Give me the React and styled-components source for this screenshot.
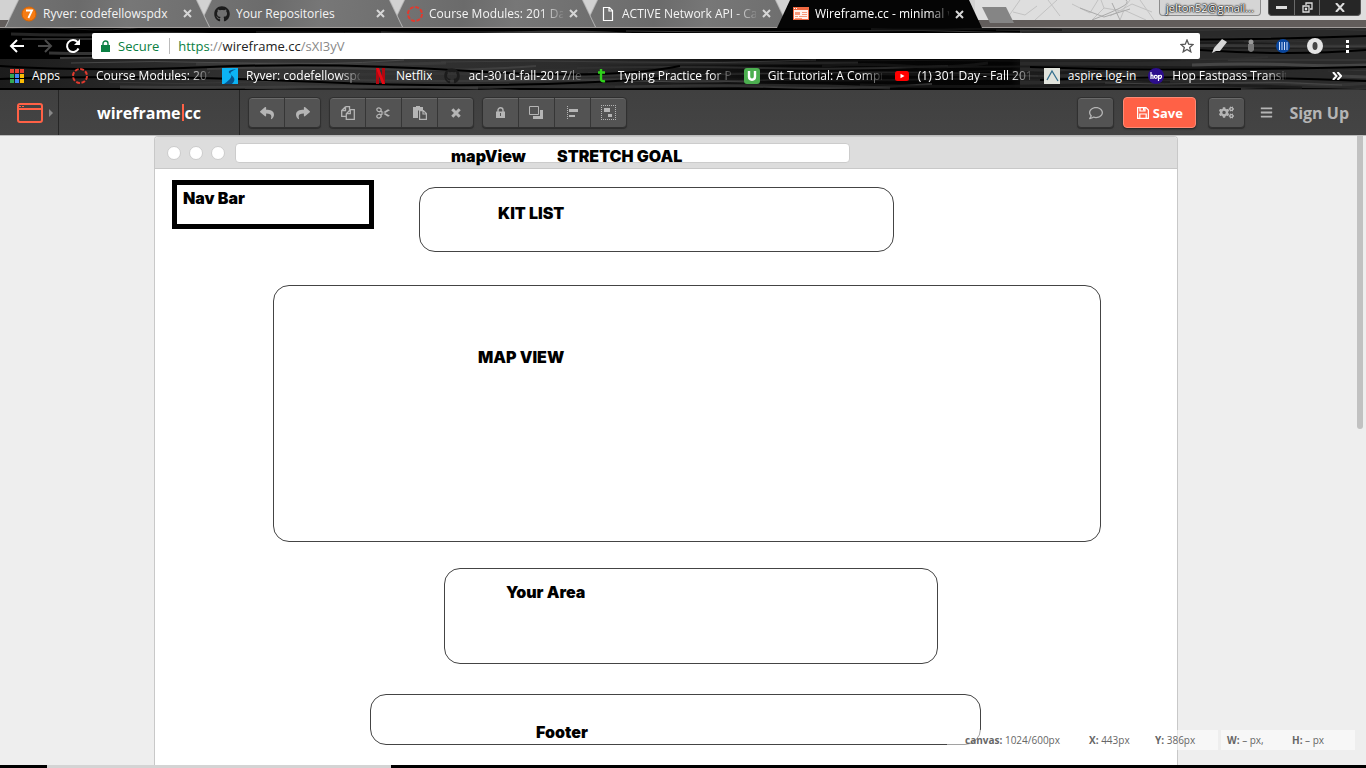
import React from "react";
import styled, { createGlobalStyle, css } from "styled-components";
import { FaGithub, FaReply, FaShare, FaRegComment, FaCogs, FaBars } from "react-icons/fa";

const ui = `"Open Sans", "Noto Sans", sans-serif`;

const GlobalStyle = createGlobalStyle`
  * { box-sizing: border-box; }
  body { margin: 0; background: #000; font-family: ${ui}; font-size: 12px; overflow: hidden; }
  button { font: inherit; color: inherit; background: none; border: 0; padding: 0; cursor: pointer; }
  a { color: inherit; text-decoration: none; }
  svg { display: block; flex: none; }
`;

const Window = styled.div`
  display: flex;
  flex-direction: column;
  height: 100vh;
  padding-bottom: 3px;
  background: linear-gradient(90deg, #000 47px, #d4d4d4 47px, #d4d4d4 391px, #000 391px);
`;

/* ---------- browser chrome ---------- */

const Chrome = styled.header`
  position: relative;
  background: #0a0a0a;
  color: #fff;
`;

const Backdrop = styled.svg`
  position: absolute;
  inset: 0;
  width: 100%;
  height: 100%;
`;

const TabStrip = styled.div`
  position: relative;
  display: flex;
  height: 28px;
  padding-left: 5px;
  border-bottom: 1px solid #a19d9b;
`;

const Tab = styled.div`
  position: relative;
  z-index: ${(p) => p.$z};
  flex: 0 1 205px;
  min-width: 0;
  height: ${(p) => (p.$active ? 28 : 27)}px;
  margin-right: -12px;
  padding: 0 18px 0 16px;
  display: flex;
  align-items: center;
  gap: 6px;
  color: ${(p) => (p.$active ? "#fff" : "#f4f4f4")};
  isolation: isolate;
  &::before, &::after {
    content: "";
    position: absolute;
    z-index: -2;
    inset: 0;
    clip-path: polygon(13px 0, calc(100% - 13px) 0, 100% 100%, 0 100%);
    background: ${(p) => (p.$active ? "#050505" : "#b4b4b4")};
  }
  &::after {
    z-index: -1;
    inset: 0 1px;
    background: ${(p) => (p.$active ? "#050505" : "linear-gradient(100deg, #747474, #6b6b6b 35%, #777 60%, #6e6e6e)")};
  }
`;

const Fading = styled.span`
  flex: ${(p) => (p.$grow ? "1 1 0" : "0 1 auto")};
  min-width: 0;
  max-width: ${(p) => p.$max || "none"};
  overflow: hidden;
  white-space: nowrap;
  line-height: 16px;
  ${(p) => p.$fade && css`mask-image: linear-gradient(to right, #000 calc(100% - 22px), rgba(0, 0, 0, 0.15));`}
`;

const CloseTab = styled.button`
  color: #d6d6d6;
`;

const NewTab = styled.button`
  position: relative;
  width: 36px;
  height: 16px;
  margin: 7px 0 0 10px;
  background: #858585;
  clip-path: polygon(2px 0, 26px 0, 34px 100%, 10px 100%);
`;

const Account = styled.button`
  height: 16px;
  width: 102px;
  margin-left: auto;
  margin-right: 7px;
  border: 1px solid #8c8c8c;
  border-top: 0;
  border-radius: 0 0 4px 4px;
  background: #d5d5d5;
  color: #fff;
  font-size: 11px;
  line-height: 15px;
  text-shadow: 0 0 2px #000, 0 0 2px #000, 0 0 1px #000;
`;

const WindowButtons = styled.div`
  display: flex;
  height: 16px;
  margin-right: 5px;
  border-radius: 0 0 4px 4px;
  background: #262626;
  border: 1px solid #555;
  border-top: 0;
`;

const WindowButton = styled.button`
  display: flex;
  align-items: center;
  justify-content: center;
  width: ${(p) => (p.$wide ? 41 : 25)}px;
  border-left: ${(p) => (p.$first ? 0 : "1px solid #6a6a6a")};
`;

const AddressRow = styled.div`
  position: relative;
  display: flex;
  align-items: center;
  height: 36px;
  padding: 0 11px 0 9px;
`;

const NavButtons = styled.div`
  display: flex;
  gap: 12px;
  width: 83px;
`;

const Omnibox = styled.div`
  flex: 1;
  display: flex;
  align-items: center;
  height: 26px;
  padding: 0 6px 0 9px;
  background: #fff;
  border-radius: 2px;
  font-size: 13px;
  color: #0b8043;
`;

const Secure = styled.button`
  display: flex;
  align-items: center;
  gap: 8px;
  height: 16px;
  padding-right: 10px;
  border-right: 1px solid #bbb;
`;

const Url = styled.div`
  flex: 1;
  padding-left: 8px;
  white-space: nowrap;
  color: #888;
  outline: 0;
  b { font-weight: 400; color: #222; }
  i { font-style: normal; color: #0b8043; }
`;

const Extensions = styled.div`
  display: flex;
  align-items: center;
  gap: 16px;
  padding-left: 11px;
`;

const Bookmarks = styled.nav`
  position: relative;
  display: flex;
  align-items: center;
  gap: 12px;
  height: 26px;
  padding: 0 24px 2px 8px;
  overflow: hidden;
`;

const Bookmark = styled.a`
  display: flex;
  align-items: center;
  gap: 8px;
  min-width: 0;
  flex: none;
`;

const More = styled.button`
  margin-left: auto;
`;

/* ---------- wireframe application ---------- */

const AppBar = styled.header`
  position: relative;
  display: flex;
  align-items: center;
  height: 45px;
  padding-right: 17px;
  background: linear-gradient(#404040, #444);
  color: #b5b5b5;
`;

const StencilButton = styled.button`
  display: flex;
  align-items: center;
  gap: 6px;
  width: 59px;
  height: 100%;
  padding-left: 17px;
  border-right: 1px solid #262626;
`;

const Brand = styled.a`
  display: flex;
  align-items: center;
  justify-content: center;
  gap: 1px;
  width: 181px;
  height: 100%;
  border-right: 1px solid #262626;
  color: #fff;
  font-size: 16px;
  font-weight: 700;
`;

const Caret = styled.span`
  width: 2px;
  height: 17px;
  background: #ff6146;
`;

const Tools = styled.div`
  display: flex;
  gap: 8px;
  margin-left: 8px;
`;

const ToolGroup = styled.div`
  display: flex;
  height: 31px;
  border: 1px solid #303030;
  border-radius: 4px;
  background: #535353;
  box-shadow: inset 0 1px #6b6b6b, 0 1px 1px #2c2c2c;
`;

const ToolButton = styled.button`
  display: flex;
  align-items: center;
  justify-content: center;
  width: 35px;
  & + & { width: 36px; border-left: 1px solid #363636; }
`;

const Actions = styled.div`
  display: flex;
  align-items: center;
  margin-left: auto;
`;

const SaveButton = styled.button`
  display: flex;
  align-items: center;
  justify-content: center;
  gap: 4px;
  width: 73px;
  height: 31px;
  margin: 0 12px 0 9px;
  border-radius: 4px;
  border: 1px solid #ff8a75;
  background: #ff6146;
  box-shadow: 0 1px 2px #222;
  color: #fff;
  font-size: 13px;
  font-weight: 700;
`;

const MenuButton = styled.button`
  margin: 0 16px 0 15px;
`;

const SignUp = styled.a`
  font-size: 16px;
  font-weight: 700;
`;

const Workspace = styled.main`
  position: relative;
  flex: 1;
  min-height: 0;
  display: flex;
  justify-content: center;
  padding-right: 34px;
  overflow: hidden;
  background: #eee;
  border-top: 1px solid #bbb;
`;

const Canvas = styled.section`
  position: relative;
  flex: 0 1 1024px;
  background: #fff;
  border: 1px solid #c8c8c8;
  border-bottom: 0;
  border-radius: 4px 4px 0 0;
  overflow: hidden;
`;

const CanvasTop = styled.div`
  display: flex;
  align-items: center;
  gap: 8px;
  height: 32px;
  padding-left: 12px;
  background: #ddd;
  border-bottom: 1px solid #c8c8c8;
`;

const Dot = styled.span`
  width: 14px;
  height: 14px;
  border: 1px solid #ccc;
  border-radius: 50%;
  background: #fff;
`;

const CanvasAddress = styled.span`
  flex: 0 1 615px;
  height: 20px;
  margin-left: 2px;
  border: 1px solid #ccc;
  border-radius: 4px;
  background: #fff;
`;

const Shape = styled.div`
  position: absolute;
  left: ${(p) => p.$x}px;
  top: ${(p) => p.$y}px;
  width: ${(p) => p.$w}px;
  height: ${(p) => p.$h}px;
  border: ${(p) => (p.$heavy ? "5px solid #000" : "1px solid #444")};
  border-radius: ${(p) => (p.$heavy ? 0 : 16)}px;
`;

const Label = styled.span`
  position: absolute;
  left: ${(p) => p.$x}px;
  top: ${(p) => p.$y}px;
  color: #000;
  font-family: Inter, "Liberation Sans", sans-serif;
  font-size: 16px;
  font-weight: 900;
  line-height: 20px;
  white-space: pre;
`;

const ScrollThumb = styled.div`
  position: absolute;
  top: 0;
  right: 3px;
  width: 6px;
  height: 293px;
  border-radius: 0 0 3px 3px;
  background: #c1c1c1;
`;

const Status = styled.footer`
  position: absolute;
  right: 11px;
  bottom: 15px;
  display: flex;
  gap: 3px;
  color: #666;
  font-size: 10px;
  line-height: 20px;
`;

const StatusBox = styled.div`
  display: grid;
  grid-template-columns: ${(p) => p.$cols};
  padding-left: ${(p) => p.$pad}px;
  background: rgba(255, 255, 255, 0.5);
  white-space: nowrap;
`;

/* ---------- drawings ---------- */

const waves = Array.from({ length: 70 }, (_, i) => {
  const y = 29 + ((i * 17) % 61);
  const x = (i * 283) % 1366;
  const w = 150 + ((i * 71) % 330);
  const b = ((i * 5) % 7) - 3;
  const shade = x > 640 && x < 980 ? 24 : 42 + ((i * 23) % 44);
  return { d: `M${x} ${y}q${w / 4} ${b} ${w / 2} 0t${w / 2} ${b}`, c: `rgb(${shade},${shade},${shade})`, s: 1 + (i % 3) };
});

function ChromeBackdrop() {
  return (
    <Backdrop viewBox="0 0 1366 90" preserveAspectRatio="none" aria-hidden="true">
      <defs>
        <linearGradient id="grain" x1="0" x2="1">
          <stop offset="0" stopColor="#1c1c1c" />
          <stop offset=".2" stopColor="#343434" />
          <stop offset=".42" stopColor="#2c2c2c" />
          <stop offset=".58" stopColor="#060606" />
          <stop offset=".74" stopColor="#040404" />
          <stop offset=".78" stopColor="#303030" />
          <stop offset="1" stopColor="#262626" />
        </linearGradient>
      </defs>
      <rect width="1366" height="90" fill="#000" />
      <rect y="59" width="1366" height="29" fill="url(#grain)" />
      <rect x="1020" y="28" width="346" height="60" fill="#2a2a2a" />
      {waves.map((w, i) => <path key={i} d={w.d} fill="none" stroke={w.c} strokeWidth={w.s} opacity=".75" />)}
      <path d="M0 66q90 6 210 1t260 4 210-5M0 79q140-5 320 3t340-4M1010 37q160 6 356-1M1200 50q90 6 166 0M1030 67q130 5 336 0M1040 80q150-6 326 1" fill="none" stroke="#000" strokeWidth="2" />
      <rect width="1366" height="28" fill="#d2d2d2" />
      <rect x="975" width="391" height="28" fill="#dedede" />
      <path d="M1006 20l14-20M1013 12l12 3 12-9M1035 20l22-20M1048 0l12 16M1072 4l18 9 8-13M1092 20l12-12 18 3 8-11M1104 8l-3-8M1120 20l4-10 22 10M1110 16l22-12 20 8M1140 0l14 20" fill="none" stroke="#c2c2c2" />
      <path d="M1092 20q18-7 28-12t6-8M1080 8l24 9 26-8M1112 3l8 17" fill="none" stroke="#aaa" strokeWidth="1" />
      <path d="M0 20h1366v8H0z" fill="#625d5b" />
    </Backdrop>
  );
}

const Cross = () => <svg width="9" height="9" viewBox="0 0 9 9"><path d="M1 1l7 7M8 1L1 8" stroke="currentColor" strokeWidth="2" /></svg>;
const Seven = () => (
  <svg width="16" height="16" viewBox="0 0 16 16"><circle cx="8" cy="8" r="7" fill="#f57c14" stroke="#d96400" /><path d="M5 4.5h6L7.4 12" fill="none" stroke="#fff" strokeWidth="1.8" /></svg>
);
const Canvasring = () => (
  <svg width="16" height="16" viewBox="0 0 16 16"><circle cx="8" cy="8" r="7" fill="none" stroke="#e13a2e" strokeWidth="2" strokeDasharray="3.9 1.6" /></svg>
);
const Page = () => <svg width="16" height="16" viewBox="0 0 16 16"><path d="M3.5 1.5h6l3 3v10h-9zM9 1.5V5h3.5" fill="none" stroke="#fff" strokeWidth="1.2" /></svg>;
const WireIcon = () => (
  <svg width="16" height="16" viewBox="0 0 16 16"><path fill="#fff3ee" d="M0 1h16v13H0z" /><path d="M0 1h16v3H0zM0 4h1v10H0zM15 4h1v10h-1zM0 13h16v1H0z" fill="#f26a42" /><path d="M2 6h5v3H2zM9 6h5v1H9zM9 8h5v1H9zM2 10h3v1H2zM6 10h8v1H6zM2 12h7v1H2z" fill="#f79a7c" /><path d="M1 2h1v1H1zM3 2h1v1H3z" fill="#fff" /></svg>
);
const AppsIcon = () => (
  <svg width="16" height="16" viewBox="0 0 16 16">
    {["#e94335", "#e94335", "#e94335", "#34a853", "#4285f4", "#fbbc05", "#34a853", "#4285f4", "#fbbc05"].map((c, i) => (
      <rect key={i} x={2 + (i % 3) * 5} y={1 + Math.floor(i / 3) * 5} width="4" height="4" fill={c} />
    ))}
  </svg>
);
const RyverIcon = () => <svg width="16" height="16" viewBox="0 0 16 16"><path fill="#0cb4f5" d="M0 0h16v16H0z" /><path d="M14 1C8 2 5 3 8 5.500s1 5.500-6 10.500h8c5-5 1-7-1-9.500S11 3 14 1z" fill="#07558f" /></svg>;
const NetflixIcon = () => <svg width="16" height="16" viewBox="0 0 16 16"><path d="M4 0h3v16H4zM10 0h3v16h-3z" fill="#b20710" /><path d="M4 0h3l6 16h-3z" fill="#e50914" /></svg>;
const TypingIcon = () => <svg width="16" height="16" viewBox="0 0 16 16"><path d="M7 1v10q0 3 4 2M4 4.500h7" fill="none" stroke="#2fd11b" strokeWidth="2.4" /></svg>;
const UIcon = () => <svg width="16" height="16" viewBox="0 0 16 16"><rect width="16" height="16" rx="3" fill="#4caf50" /><path d="M5 3v5.5q0 3.2 3 3.2t3-3.2V3" fill="none" stroke="#fff" strokeWidth="2.4" /></svg>;
const TubeIcon = () => <svg width="16" height="16" viewBox="0 0 16 16"><rect x="1" y="3" width="14" height="10" rx="2.5" fill="#f00" /><path d="M6.5 5.7v4.6l4-2.3z" fill="#fff" /></svg>;
const AspireIcon = () => <svg width="16" height="16" viewBox="0 0 16 16"><path fill="#e1e3dc" d="M0 0h16v16H0z" /><path d="M3 12l5-9 6 10" fill="none" stroke="#35708e" strokeWidth="1.3" /></svg>;
const HopIcon = () => <svg width="16" height="16" viewBox="0 0 16 16"><circle cx="8" cy="8" r="8" fill="#2c0d8c" /><path d="M3 4v7M3 8q2-2 2 0v3M10.500 7v6M10.500 8.500q3-2.500 3 0t-3 1.500" fill="none" stroke="#fff" strokeWidth="1.2" /><circle cx="7.800" cy="8.800" r="1.500" fill="none" stroke="#fff" strokeWidth="1.200" /></svg>;

const Back = ({ dim, flip }) => (
  <svg width="16" height="16" viewBox="0 0 16 16"><path transform={flip ? "matrix(-1 0 0 1 16 0)" : undefined} d="M15 8H2M8 2L2 8l6 6" fill="none" stroke={dim ? "#4a4a4a" : "#fff"} strokeWidth="2" /></svg>
);
const Reload = () => <svg width="16" height="16" viewBox="0 0 16 16"><path d="M13.500 10.500A6 6 0 1 1 12.500 4" fill="none" stroke="#fff" strokeWidth="2" /><path d="M15 1v6H9z" fill="#fff" /></svg>;
const GreenLock = () => <svg width="9" height="13" viewBox="0 0 9 13"><path d="M0 5h9v7H0z" fill="#0b8043" /><path d="M2 5V3.500a2.500 2.500 0 0 1 5 0V5" fill="none" stroke="#0b8043" strokeWidth="1.400" /></svg>;
const Star = () => <svg width="14" height="14" viewBox="0 0 14 14"><path d="M7 1l1.700 4.200 4.400.3-3.400 2.900 1.100 4.400L7 10.400l-3.800 2.400 1.100-4.400L.9 5.500l4.400-.3z" fill="none" stroke="#555" strokeWidth="1.300" /></svg>;

const WindowLogo = () => (
  <svg width="26" height="20" viewBox="0 0 26 20"><path d="M3 1h20q2 0 2 2v14q0 2-2 2H3q-2 0-2-2V3q0-2 2-2zM1 6h24" fill="none" stroke="#ff6146" strokeWidth="2" /><path d="M2 3.500h2M5 3.500h2" stroke="#ff6146" /></svg>
);
const Copy = () => <svg width="14" height="14" viewBox="0 0 14 14"><path d="M4.500.7h4v3M4.500.7L.7 4.500v5.800h4.500M4.500.7v3.800H.7M9.300 3.700h4v9.600h-8V7.700zM9.300 3.700v4h-4" fill="none" stroke="currentColor" strokeWidth="1.300" /></svg>;
const Cut = () => <svg width="15" height="12" viewBox="0 0 15 12"><ellipse cx="3" cy="2.800" rx="2.200" ry="1.800" transform="rotate(20 3 2.800)" fill="none" stroke="currentColor" strokeWidth="1.300" /><ellipse cx="3" cy="9.200" rx="2.200" ry="1.800" transform="rotate(-20 3 9.200)" fill="none" stroke="currentColor" strokeWidth="1.300" /><path d="M4.800 3.500L14 8.800l-2 1L4.800 5.200zM4.800 8.500L14 3.200l-2-1-7.200 4.600z" fill="currentColor" /></svg>;
const Paste = () => <svg width="14" height="14" viewBox="0 0 14 14"><path d="M0 1h3V0h4v1h3v3H6L5 5v7H0z" fill="currentColor" /><path d="M6.600 4.600h3.800l3 3v5.800H6.600zM10 4.600V8h3.400" fill="none" stroke="currentColor" strokeWidth="1.200" /></svg>;
const Delete = () => <svg width="10" height="10" viewBox="0 0 10 10"><path d="M1.300 1.300l7.400 7.400M8.700 1.300L1.300 8.700" stroke="currentColor" strokeWidth="3" /></svg>;
const Lock = () => <svg width="9" height="11" viewBox="0 0 9 11"><path fillRule="evenodd" d="M0 4.500h9V11H0zM4 6v3h1V6z" fill="currentColor" /><path d="M2 5V3a2.500 2.200 0 0 1 5 0v2" fill="none" stroke="currentColor" strokeWidth="1.400" /></svg>;
const Layers = () => <svg width="15" height="13" viewBox="0 0 15 13"><path d="M.5.500h9v8h-9z" fill="none" stroke="currentColor" /><path d="M11 4h3v9H4v-3h7z" fill="currentColor" /></svg>;
const AlignLeft = () => <svg width="12" height="14" viewBox="0 0 12 14" shapeRendering="crispEdges"><path d="M.5 0v14" stroke="currentColor" strokeDasharray="1 1" /><path d="M2 3h9v3H2zM2 9h6v2H2z" fill="currentColor" /></svg>;
const GroupIcon = () => <svg width="15" height="15" viewBox="0 0 15 15" shapeRendering="crispEdges"><path d="M0 .5h15M0 14.500h15M.5 0v15M14.500 0v15" fill="none" stroke="currentColor" strokeDasharray="1 1" /><path d="M3 3h6v4H3zM7 9h4v3H7z" fill="currentColor" /></svg>;
const Floppy = () => <svg width="12" height="12" viewBox="0 0 12 12"><path d="M.6.600h8.400l2.400 2.400v8.400H.6zM3 .6v3.400h5V.6M2.800 11.400V7h6.400v4.400" fill="none" stroke="#fff" strokeWidth="1.200" /><path d="M6 1h1.500v2.500H6z" fill="#fff" /></svg>;

/* ---------- content ---------- */

const tabs = [
  ["Ryver: codefellowspdx", <Seven />],
  ["Your Repositories", <FaGithub size={16} color="#1c1c1c" />],
  ["Course Modules: 201 Da", <Canvasring />, true],
  ["ACTIVE Network API - Ca", <Page />, true],
  ["Wireframe.cc - minimal w", <WireIcon />, true],
];

const bookmarks = [
  ["Apps", <AppsIcon />],
  ["Course Modules: 201", <Canvasring />, true],
  ["Ryver: codefellowspd", <RyverIcon />, true],
  ["Netflix", <NetflixIcon />],
  ["acl-301d-fall-2017/le", <FaGithub size={16} color="#1c1c1c" />, true],
  ["Typing Practice for Pr", <TypingIcon />, true],
  ["Git Tutorial: A Compr", <UIcon />, true],
  ["(1) 301 Day - Fall 201", <TubeIcon />, true],
  ["aspire log-in", <AspireIcon />],
  ["Hop Fastpass Transit", <HopIcon />, true],
];

const toolGroups = [
  [["Undo", <FaReply size={14} />], ["Redo", <FaShare size={14} />]],
  [["Copy", <Copy />], ["Cut", <Cut />], ["Paste", <Paste />], ["Delete", <Delete />]],
  [["Lock", <Lock />], ["Order", <Layers />], ["Align", <AlignLeft />], ["Group", <GroupIcon />]],
];

const shapes = [
  [17, 43, 202, 49, true],
  [264, 50, 475, 65],
  [118, 148, 828, 257],
  [289, 431, 494, 96],
  [215, 557, 611, 51],
];

const labels = [
  ["mapView", 296, 9],
  ["STRETCH GOAL", 402, 9],
  ["Nav Bar", 28, 51],
  ["KIT LIST", 343, 66],
  ["MAP VIEW", 323, 210],
  ["Your Area", 351, 445],
  ["Footer", 381, 585],
];

export default function App() {
  return (
    <Window>
      <GlobalStyle />
      <Chrome>
        <ChromeBackdrop />
        <TabStrip>
          {tabs.map(([title, icon, fade], i) => (
            <Tab key={title} $active={i === 4} $z={i === 4 ? 9 : 5 - i}>
              {icon}
              <Fading $grow $fade={fade}>{title}</Fading>
              <CloseTab aria-label="Close tab"><Cross /></CloseTab>
            </Tab>
          ))}
          <NewTab aria-label="New tab" />
          <Account>jelton52@gmail...</Account>
          <WindowButtons>
            <WindowButton $first aria-label="Minimize"><svg width="11" height="4"><path d="M0 0h11v3H0z" fill="#ddd" /></svg></WindowButton>
            <WindowButton aria-label="Restore"><svg width="11" height="11"><path d="M4 3V1h6v6H8M1 4h6v6H1zM3.500 6.500h1v1h-1z" fill="none" stroke="#ddd" strokeWidth="1.300" /></svg></WindowButton>
            <WindowButton $wide aria-label="Close"><svg width="10" height="9"><path d="M1 0l8 9M9 0L1 9" stroke="#ddd" strokeWidth="2" /></svg></WindowButton>
          </WindowButtons>
        </TabStrip>
        <AddressRow>
          <NavButtons>
            <button aria-label="Back"><Back /></button>
            <button aria-label="Forward"><Back dim flip /></button>
            <button aria-label="Reload"><Reload /></button>
          </NavButtons>
          <Omnibox>
            <Secure><GreenLock />Secure</Secure>
            <Url role="textbox" aria-label="Address" tabIndex={0}><i>https</i>://<b>wireframe.cc</b>/sXI3yV</Url>
            <button aria-label="Bookmark this page"><Star /></button>
          </Omnibox>
          <Extensions>
            <svg width="16" height="16"><path d="M1 15l2-5 8-9 5 3-7 9-4 0z" fill="#d8d8d8" /></svg>
            <svg width="16" height="16"><circle cx="8" cy="4" r="2.500" fill="#999" /><path d="M5 6h6v6q-3 4-6 0z" fill="#777" /></svg>
            <svg width="16" height="16"><circle cx="8" cy="8" r="7" fill="#0b479d" /><path d="M4.500 4v8M7 4v8M9.500 4v8M12 4v8" stroke="#cfe0ff" /></svg>
            <svg width="16" height="16"><circle cx="8" cy="8" r="8" fill="#e4e4e4" /><ellipse cx="8" cy="8" rx="2.500" ry="4" fill="#444" /></svg>
            <svg width="16" height="16"><path d="M7 2h3v3H7zM7 7h3v3H7zM7 12h3v3H7z" fill="#fff" /></svg>
          </Extensions>
        </AddressRow>
        <Bookmarks>
          {bookmarks.map(([title, icon, fade]) => (
            <Bookmark key={title} href="#">
              {icon}
              <Fading $max="114px" $fade={fade}>{title}</Fading>
            </Bookmark>
          ))}
          <More aria-label="More bookmarks"><svg width="10" height="8"><path d="M1 0l3.500 4L1 8M5.500 0L9 4 5.500 8" fill="none" stroke="#fff" strokeWidth="2" /></svg></More>
        </Bookmarks>
      </Chrome>

      <AppBar>
        <StencilButton aria-label="Choose stencil">
          <WindowLogo />
          <svg width="4" height="8"><path d="M0 0l4 4-4 4z" fill="#888" /></svg>
        </StencilButton>
        <Brand href="#">wireframe<Caret />cc</Brand>
        <Tools>
          {toolGroups.map((group, i) => (
            <ToolGroup key={i}>
              {group.map(([name, icon]) => <ToolButton key={name} aria-label={name}>{icon}</ToolButton>)}
            </ToolGroup>
          ))}
        </Tools>
        <Actions>
          <ToolGroup><ToolButton aria-label="Comments"><FaRegComment size={14} /></ToolButton></ToolGroup>
          <SaveButton><Floppy />Save</SaveButton>
          <ToolGroup><ToolButton aria-label="Settings"><FaCogs size={15} /></ToolButton></ToolGroup>
          <MenuButton aria-label="Menu"><FaBars size={13} /></MenuButton>
          <SignUp href="#">Sign Up</SignUp>
        </Actions>
      </AppBar>

      <Workspace>
        <Canvas>
          <CanvasTop><Dot /><Dot /><Dot /><CanvasAddress /></CanvasTop>
          {shapes.map(([x, y, w, h, heavy]) => <Shape key={y} $x={x} $y={y} $w={w} $h={h} $heavy={heavy} />)}
          {labels.map(([text, x, y]) => <Label key={text} $x={x} $y={y}>{text}</Label>)}
        </Canvas>
        <ScrollThumb />
        <Status>
          <StatusBox $cols="124px 66px 63px" $pad={18}>
            <span><b>canvas:</b> 1024/600px</span><span><b>X:</b> 443px</span><span><b>Y:</b> 386px</span>
          </StatusBox>
          <StatusBox $cols="65px 63px" $pad={6}>
            <span><b>W:</b> – px,</span><span><b>H:</b> – px</span>
          </StatusBox>
        </Status>
      </Workspace>
    </Window>
  );
}
